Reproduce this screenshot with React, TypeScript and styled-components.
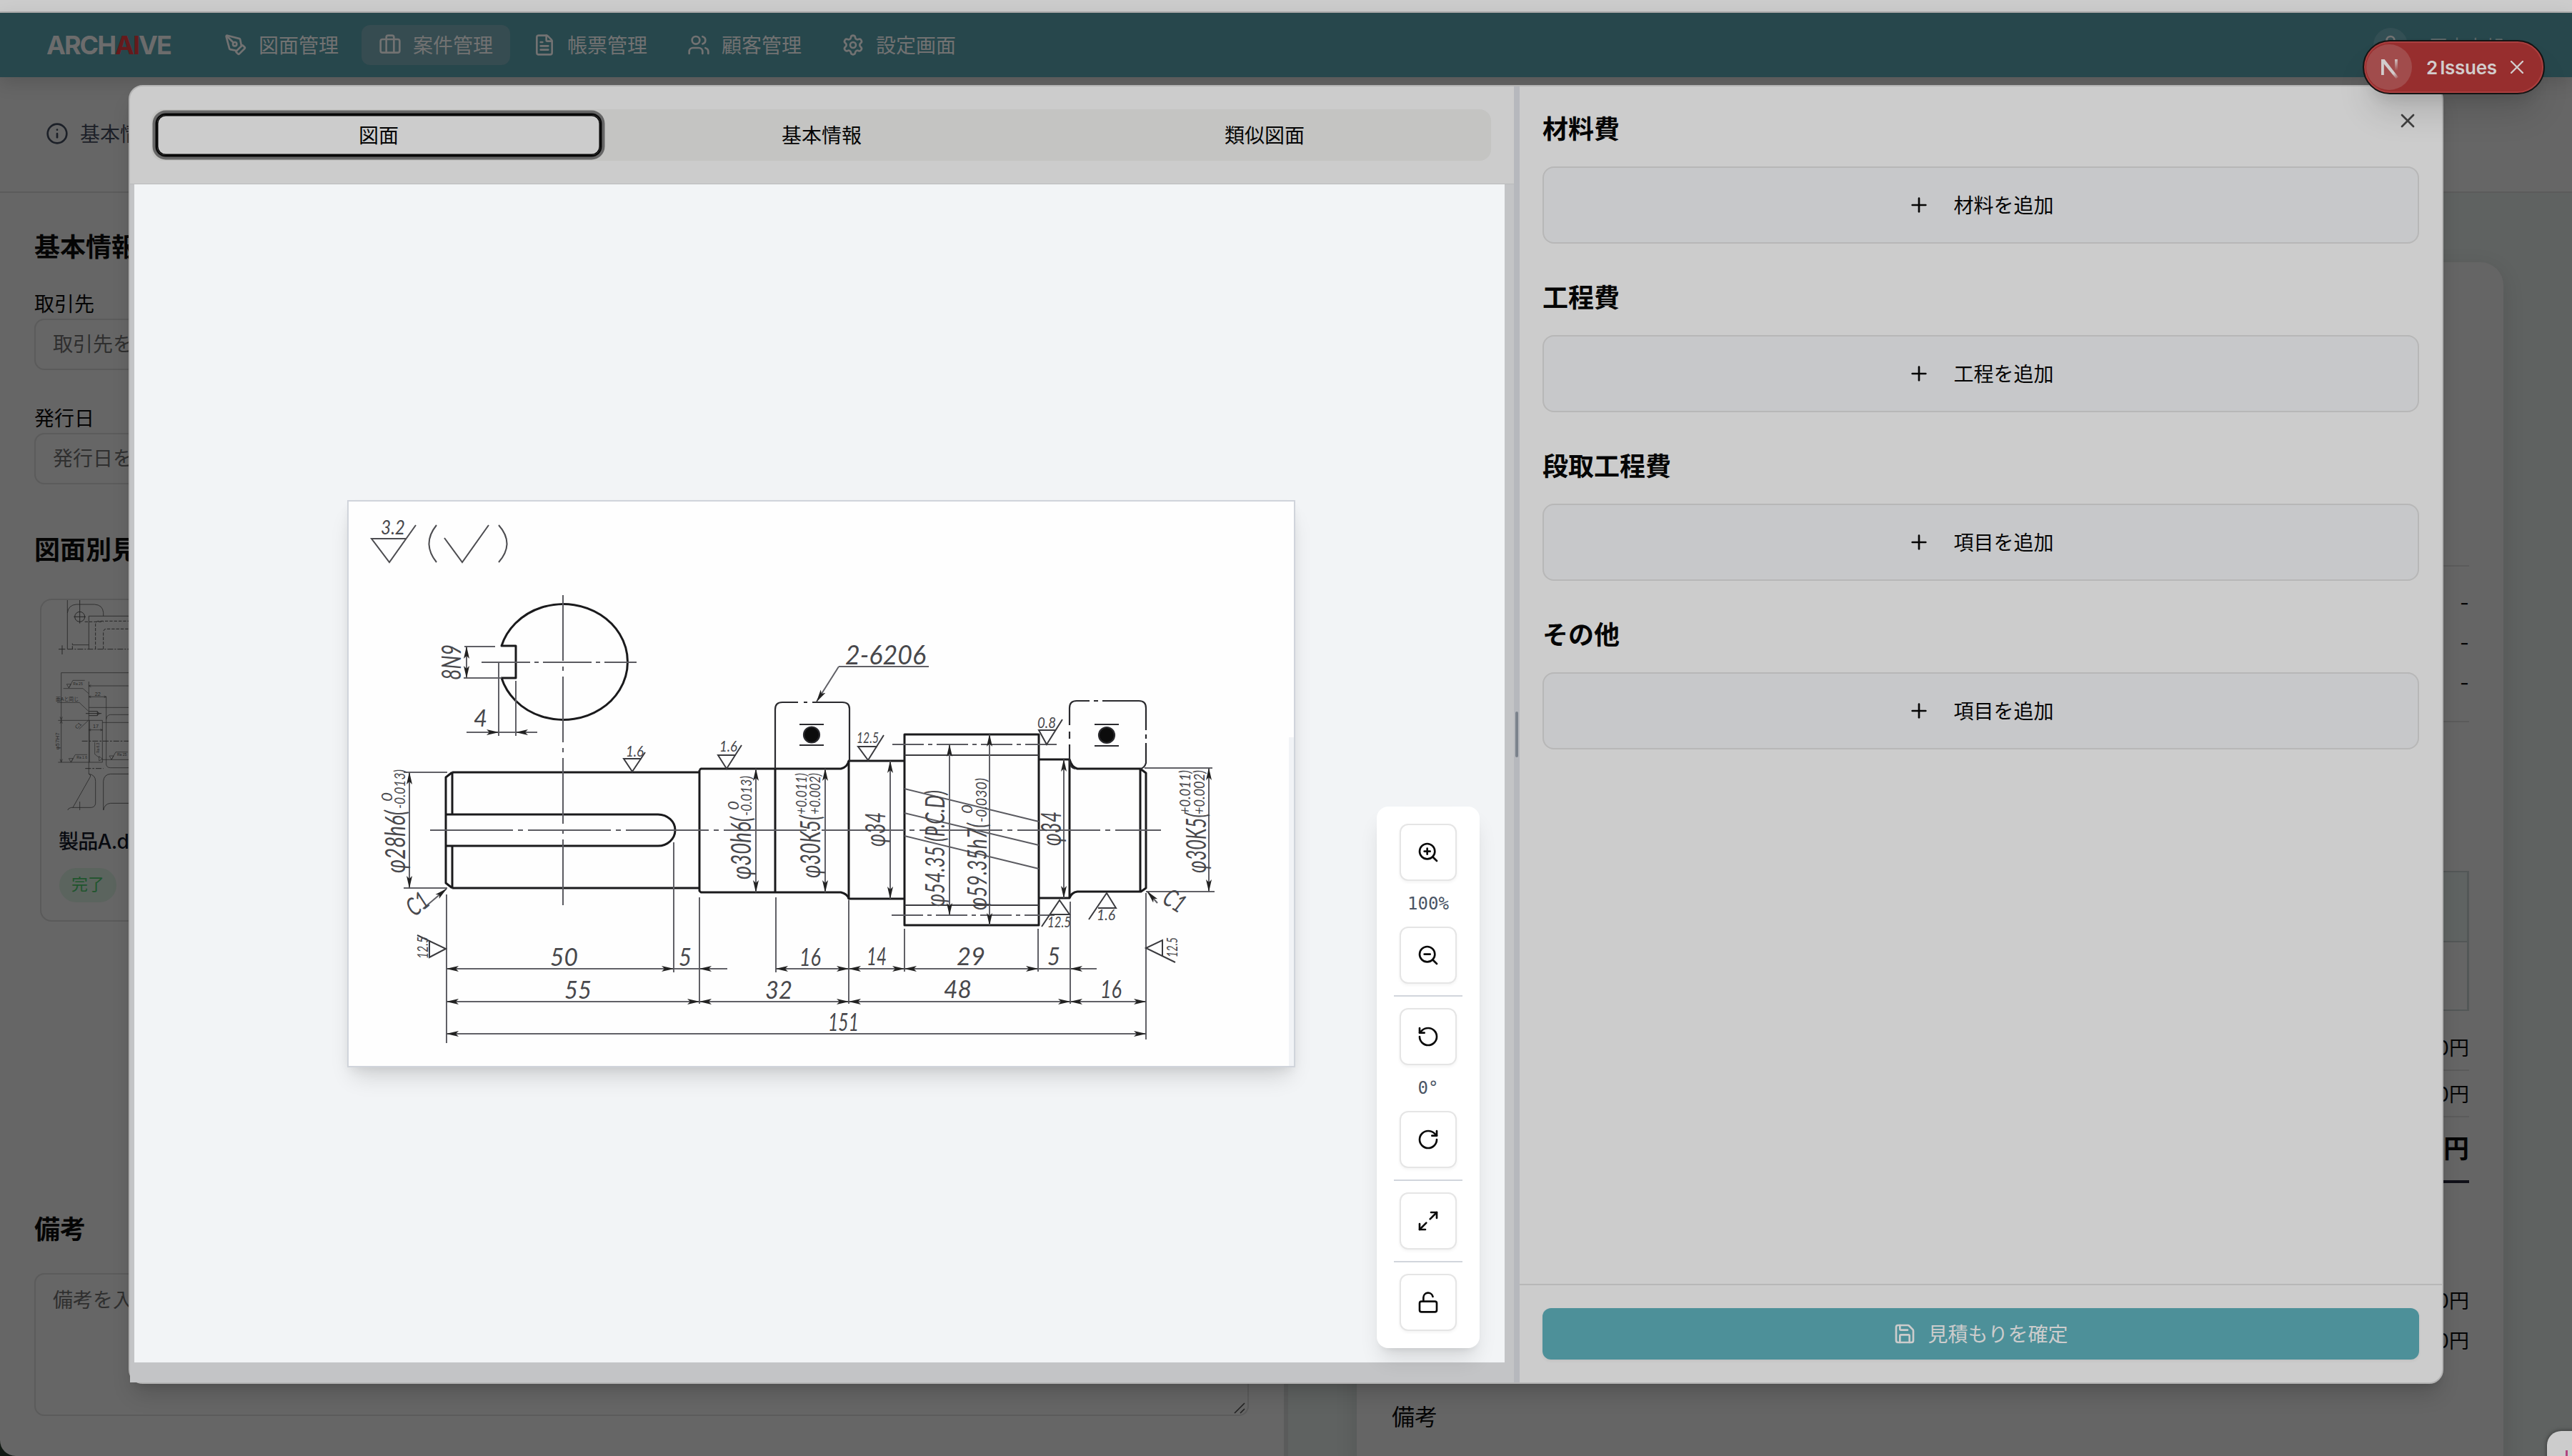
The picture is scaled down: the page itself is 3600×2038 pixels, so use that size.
import React from "react";
import styled, { createGlobalStyle, css } from "styled-components";
import {
  PenTool, FileText, Users, Settings, Info, User, Plus, X, Save,
  ZoomIn, ZoomOut, RotateCcw, RotateCw, Maximize2, LockOpen,
} from "lucide-react";

const Global = createGlobalStyle`
  * { box-sizing: border-box; }
  html, body { margin: 0; padding: 0; background: #121a14; }
  body { font-family: Inter, "Noto Sans CJK JP", sans-serif; font-size: 28px; color: #050505; }
  button { font: inherit; color: inherit; margin: 0; }
`;

const Page = styled.div`
  position: relative;
  width: 3600px;
  height: 2038px;
  overflow: hidden;
  display: flex;
  flex-direction: column;
  background: #666;
  border-radius: 0 0 0 22px;
`;

const TopStrip = styled.div`
  height: 18px;
  flex: none;
  background: #ccc;
  border-bottom: 2px solid #adadad;
`;

const Nav = styled.nav`
  height: 90px;
  flex: none;
  display: flex;
  align-items: center;
  gap: 8px;
  padding: 0 96px 0 65px;
  background: #27474c;
  box-shadow: 0 8px 24px rgba(0, 0, 0, 0.14);
  position: relative;
  color: #727272;
`;

const Logo = styled.div`
  width: 217px;
  padding-bottom: 1px;
  font-size: 36px;
  font-weight: 700;
  letter-spacing: -2px;
  color: #6c6c6c;
  span { color: #651a1c; }
`;

const NavItem = styled.a<{ $active?: boolean }>`
  display: flex;
  align-items: center;
  gap: 16px;
  height: 56px;
  padding: 0 24px;
  border-radius: 12px;
  white-space: nowrap;
  background: ${(p) => (p.$active ? "#364c51" : "transparent")};
`;

const Caption = styled.span`
  padding-bottom: 3px;
`;

const Account = styled.div`
  margin-left: auto;
  display: flex;
  align-items: center;
  gap: 30px;
  font-size: 26px;
  color: #5c6667;
`;

const Avatar = styled.span`
  width: 48px;
  height: 48px;
  display: grid;
  place-items: center;
  border-radius: 50%;
  background: #334f54;
  color: #727272;
`;

const SubBar = styled.div`
  height: 162px;
  flex: none;
  display: flex;
  align-items: center;
  gap: 16px;
  padding: 0 64px 2px;
  border-bottom: 2px solid #5b5b5b;
  color: #1c2028;
`;

const Body = styled.div`
  flex: 1;
  display: flex;
  min-height: 0;
`;

const FormColumn = styled.section`
  width: 1803px;
  flex: none;
  padding: 54px 49px 0 48px;
  border-right: 6px solid #5a5b5b;
`;

const Heading = styled.h2<{ $top?: number; $light?: boolean }>`
  margin: ${(p) => p.$top ?? 0}px 0 0;
  height: 44px;
  line-height: 44px;
  font-size: ${(p) => (p.$light ? 32 : 36)}px;
  font-weight: ${(p) => (p.$light ? 400 : 700)};
`;

const Label = styled.div<{ $top: number }>`
  margin-top: ${(p) => p.$top}px;
  height: 40px;
  line-height: 40px;
`;

const field = css`
  border: 2px solid #5b5b5b;
  border-radius: 14px;
  color: #2f2f2f;
  padding: 0 24px;
`;

const Field = styled.div`
  ${field}
  height: 72px;
  line-height: 68px;
`;

const TextArea = styled.div`
  ${field}
  display: flex;
  justify-content: space-between;
  height: 200px;
  margin-top: 39px;
  padding: 15px 2px 0 24px;
  line-height: 42px;
  svg { align-self: flex-end; }
`;

const ProductCard = styled.article`
  width: 330px;
  height: 452px;
  margin: 46px 0 0 8px;
  border: 2px solid #5a5a5a;
  border-radius: 16px;
  svg { display: block; }
`;

const ProductName = styled.div`
  margin: 24px 0 0 24px;
  height: 40px;
  line-height: 40px;
  font-weight: 500;
  letter-spacing: -0.7px;
  color: #080a10;
`;

const Status = styled.span`
  display: block;
  width: 80px;
  height: 48px;
  margin: 17px 0 0 25px;
  line-height: 46px;
  text-align: center;
  border-radius: 24px;
  background: #5b645e;
  color: #20552d;
  font-size: 23px;
`;

const PreviewColumn = styled.section`
  flex: 1;
  padding: 97px 96px 0 96px;
  background: #5f6261;
`;

const Paper = styled.div`
  height: 1700px;
  padding: 0 48px 0 49px;
  border-radius: 32px;
  background: #656565;
  box-shadow: 0 8px 30px rgba(0, 0, 0, 0.12);
`;

const Meta = styled.div`
  padding-top: 24px;
  height: 220px;
  border: solid #5b5b5b;
  border-width: 2px 0;
`;

const Row = styled.div<{ $h?: number; $line?: string; $bold?: boolean }>`
  height: ${(p) => p.$h ?? 56}px;
  display: flex;
  align-items: center;
  justify-content: flex-end;
  padding-bottom: ${(p) => (p.$bold ? 6 : 2)}px;
  border-bottom: ${(p) => p.$line ?? "0"};
  font-weight: ${(p) => (p.$bold ? 700 : 400)};
  font-size: ${(p) => (p.$bold ? 36 : 28)}px;
`;

const Spacer = styled.div<{ $h: number }>`
  height: ${(p) => p.$h}px;
`;

const Table = styled.div`
  height: 196px;
  border: 2px solid #535757;
  border-right-width: 3px;
  div { height: 98px; background: #5f6362; border-bottom: 2px solid #535757; }
`;

const Dialog = styled.div`
  position: absolute;
  left: 180px;
  top: 119px;
  width: 3240px;
  height: 1818px;
  display: flex;
  border: 2px solid #b4b4b4;
  border-radius: 20px;
  background: #ccc;
  box-shadow: 0 20px 30px -6px rgba(0, 0, 0, 0.16), 0 8px 12px -8px rgba(0, 0, 0, 0.14);
`;

const DrawingPane = styled.section`
  width: 1937px;
  display: flex;
  flex-direction: column;
`;

const TabBar = styled.div`
  height: 136px;
  padding: 32px 32px 0 30px;
`;

const TabList = styled.div`
  height: 72px;
  display: grid;
  grid-template-columns: repeat(3, 1fr);
  padding: 8px 7px 8px 8px;
  border-radius: 16px;
  background: #c4c4c2;
`;

const Tab = styled.button<{ $active?: boolean }>`
  border: 0;
  padding: 0 0 3px;
  border-radius: 12px;
  background: ${(p) => (p.$active ? "#ccc" : "transparent")};
  box-shadow: ${(p) => (p.$active ? "inset 0 0 0 1.5px #080808, 0 0 0 2.5px #080808, 0 0 0 6.5px #666" : "none")};
`;

const Stage = styled.div`
  flex: 1;
  display: flex;
  padding: 0 13px 28px 6px;
  border-top: 1px solid #b9babb;
  background: #c3c4c6;
`;

const Viewer = styled.div`
  position: relative;
  flex: 1;
  display: flex;
  align-items: center;
  justify-content: center;
  padding: 29px 0 0 5px;
  background: #f2f4f6;
`;

const Sheet = styled.div`
  width: 1327px;
  height: 794px;
  border: 2px solid #d0d4db;
  background: #fefefe;
  box-shadow: 0 20px 30px -8px rgba(0, 0, 0, 0.14), 0 6px 14px -4px rgba(0, 0, 0, 0.08);
  svg { display: block; }
`;

const Toolbar = styled.div`
  position: absolute;
  right: 35px;
  bottom: 20px;
  width: 144px;
  padding: 24px;
  display: flex;
  flex-direction: column;
  align-items: center;
  gap: 16px;
  border-radius: 16px;
  background: #fff;
  box-shadow: 0 20px 30px -6px rgba(0, 0, 0, 0.12), 0 8px 12px -8px rgba(0, 0, 0, 0.12);
`;

const ToolButton = styled.button`
  width: 80px;
  height: 80px;
  display: grid;
  place-items: center;
  padding: 0;
  border: 2px solid #e5e5e5;
  border-radius: 12px;
  background: #fff;
  color: #0a0a0a;
  box-shadow: 0 2px 4px rgba(0, 0, 0, 0.05);
`;

const Reading = styled.div`
  height: 32px;
  line-height: 32px;
  font-family: "DejaVu Sans Mono", monospace;
  font-size: 24px;
  color: #4a5565;
`;

const Rule = styled.div`
  width: 96px;
  height: 2px;
  background: #d1d5dc;
`;

const Splitter = styled.div`
  width: 8px;
  display: flex;
  justify-content: center;
  align-items: center;
  background: #b6b8bd;
`;

const Grip = styled.div`
  width: 4px;
  height: 64px;
  border-radius: 2px;
  background: #7b828c;
`;

const CostPane = styled.section`
  position: relative;
  flex: 1;
  display: flex;
  flex-direction: column;
`;

const CostList = styled.div`
  flex: 1;
  display: flex;
  flex-direction: column;
  gap: 54px;
  padding: 38px 32px 0;
`;

const AddButton = styled.button`
  width: 100%;
  height: 108px;
  margin-top: 30px;
  display: flex;
  align-items: center;
  justify-content: center;
  gap: 32px;
  border: 2px solid #b7b7b7;
  border-radius: 16px;
  background: #c7c8ca;
`;

const Footer = styled.footer`
  height: 138px;
  padding: 32px;
  border-top: 2px solid #b7b7b7;
`;

const Confirm = styled.button`
  width: 100%;
  height: 72px;
  display: flex;
  align-items: center;
  justify-content: center;
  gap: 16px;
  border: 0;
  border-radius: 12px;
  background: #4d9099;
  color: #ccc;
  box-shadow: 0 2px 4px rgba(0, 0, 0, 0.06);
`;

const CloseButton = styled.button`
  position: absolute;
  right: 32px;
  top: 32px;
  width: 32px;
  height: 32px;
  padding: 0;
  border: 0;
  background: none;
  color: #404040;
  svg { display: block; }
`;

const Issues = styled.div`
  position: absolute;
  left: 3307px;
  top: 56px;
  width: 255px;
  height: 76px;
  display: flex;
  align-items: center;
  padding-left: 3px;
  border: 2px solid #141414;
  border-radius: 38px;
  background: #972e2e;
  color: #d2cccc;
  font-size: 26px;
  font-weight: 600;
  box-shadow: inset 0 0 0 2px #ab3f3f, 0 32px 48px -8px rgba(0, 0, 0, 0.14), 0 16px 16px -8px rgba(0, 0, 0, 0.08);
  > span { width: 98px; margin-left: 20px; white-space: nowrap; letter-spacing: -0.3px; word-spacing: -3px; }
  > svg { margin-left: 20px; }
`;

const IssueMark = styled.div`
  width: 64px;
  height: 64px;
  display: grid;
  place-items: center;
  border-radius: 50%;
  background: #a14c4c;
`;

const CornerChip = styled.div`
  position: absolute;
  left: 3565px;
  top: 2003px;
  width: 80px;
  height: 80px;
  padding: 27px 0 0 26px;
  border-radius: 20px;
  background: #ccc;
  box-shadow: 0 0 6px rgba(0, 0, 0, 0.5);
  i { display: block; width: 3px; height: 12px; background: #b0447f; }
`;

const BriefcaseIcon = () => (
  <svg width="32" height="32" viewBox="0 0 24 24" fill="none" stroke="currentColor" strokeWidth="2" strokeLinecap="round" strokeLinejoin="round">
    <path d="M16 20V4a2 2 0 0 0-2-2h-4a2 2 0 0 0-2 2v16" />
    <rect x="2" y="6" width="20" height="14" rx="2" />
  </svg>
);

const NextMark = () => (
  <svg width="30" height="34" viewBox="0 0 30 34" fill="none">
    <defs>
      <linearGradient id="diag" x1="12" y1="14" x2="28" y2="33" gradientUnits="userSpaceOnUse">
        <stop offset=".6" stopColor="#d2cccc" /><stop offset="1" stopColor="#d2cccc" stopOpacity="0" />
      </linearGradient>
      <linearGradient id="stem" x1="0" y1="5" x2="0" y2="22" gradientUnits="userSpaceOnUse">
        <stop stopColor="#d2cccc" /><stop offset="1" stopColor="#d2cccc" stopOpacity="0" />
      </linearGradient>
    </defs>
    <rect x="4" y="6" width="3.8" height="22" fill="#d2cccc" />
    <path d="M4 6h4.6L28 31l-3.4 2L4 8z" fill="url(#diag)" />
    <rect x="23" y="6" width="3.8" height="17" fill="url(#stem)" />
  </svg>
);

type NoteProps = { x: number; y: number; w: number; s: number; r?: number; children: string };
const Note = ({ x, y, w, s, r = 0, children }: NoteProps) => (
  <text
    transform={`translate(${x} ${y}) rotate(${r})`}
    fontSize={s}
    textLength={w}
    lengthAdjust="spacingAndGlyphs"
    fill="#48484c"
    stroke="none"
  >
    {children}
  </text>
);

type DimProps = { a: [number, number]; b: [number, number]; one?: boolean };
const Dim = ({ a, b, one }: DimProps) => (
  <path d={`M${a[0]} ${a[1]}L${b[0]} ${b[1]}`} markerEnd="url(#arrow)" markerStart={one ? undefined : "url(#arrow)"} />
);

const ShaftDrawing = () => (
  <svg width="1323" height="790" viewBox="488 702 1323 790" fill="none" fontFamily="Lato, sans-serif" fontStyle="italic" fontWeight="400">
    <defs>
      <marker id="arrow" markerUnits="userSpaceOnUse" markerWidth="18" markerHeight="10" refX="17" refY="5" orient="auto-start-reverse">
        <path d="M0 1 17.5 5 0 9 4 5z" fill="#222" stroke="none" />
      </marker>
    </defs>
    <rect x="1804" y="1032" width="7" height="460" fill="#f1f3f6" />

    {/* general surface finish */}
    <g stroke="#4c4c50" strokeWidth="2">
      <path d="M582 735 545 787 520 754H569M622 753l25 34 37-52M611 735q-21 26 0 52M698 735q23 26 0 52" />
    </g>
    <Note x={533} y={748} w={34} s={27}>3.2</Note>

    {/* outlines */}
    <g stroke="#1a1a1c" strokeWidth="3" strokeLinejoin="round">
      <path d="M702 904A90 81 0 1 1 702 949H722V904Z" />
      <path d="M633 1081H979M633 1243H979M633 1081 624 1088V1236L633 1243M633 1081V1140M633 1184V1243M624 1140H921a24 22 0 0 1 0 44H624" />
      <path d="M979 1078V1247L981 1249H1177Q1186 1251 1188 1258H1266M979 1078 981 1076H1177Q1186 1074 1188 1065H1266" />
      <path d="M1085 1076V1249M1188 1065V1258M1266 1028H1454V1295H1266Z" />
      <path d="M1454 1063H1497Q1500 1074 1508 1076H1596L1604 1082V1243L1597 1248H1508Q1500 1249 1497 1257H1454M1497 1063V1257M1596 1076V1248" />
    </g>
    <g stroke="#2a2a2e" strokeWidth="2.2">
      <path d="M1085 1076V993q0-10 10-10H1117M1125 983h5M1137 983H1179q10 0 10 9V1065" />
      <path d="M1497 1015V991q0-10 10-10H1525M1531 981h6M1543 981H1594q10 0 10 10V1022M1497 1024v10M1497 1042V1066q1 9 8 10M1604 1028v6M1604 1040V1068q-2 7-8 8" />
      <path d="M1119 1014h34M1119 1043h34M1532 1014h34M1532 1044h34" />
      <circle cx="1136" cy="1028.5" r="11" fill="#0c0c0c" />
      <circle cx="1549" cy="1029" r="11" fill="#0c0c0c" />
      <path d="M1266 1057H1454M1266 1267H1454" stroke="#3a3a3e" />
    </g>

    {/* centre lines */}
    <g stroke="#5a5a60" strokeWidth="2">
      <path d="M788 833V1275" strokeDasharray="92 8 6 8" />
      <path d="M674 927H891" strokeDasharray="68 6 6 6" />
      <path d="M602 1162H1625" strokeDasharray="116 7 7 7" />
      <path d="M1249 1042H1484M1248 1281H1476" strokeDasharray="44 6 6 6" />
      <path d="M1266 1104 1454 1150M1266 1138 1454 1183M1266 1170 1454 1216" />
    </g>

    {/* extension and dimension lines */}
    <g stroke="#606066" strokeWidth="2">
      <path d="M650 905H693M649 949H702M698 927V1030M722 953V1030M565 1081H626M565 1243H626" />
      <path d="M625 1252V1460M943 1179V1361M979 1256V1405M1086 1256V1361M1188 1260V1405M1266 1300V1360M1453 1300V1360M1498 1262V1405M1604 1250V1455" />
      <path d="M1602 1075H1697M1604 1248H1700M1174 933H1300" />
      <Dim a={[653, 905]} b={[653, 949]} />
      <Dim one a={[653, 1025]} b={[698, 1025]} />
      <Dim one a={[752, 1025]} b={[722, 1025]} />
      <path d="M698 1025h24" />
      <Dim a={[573, 1081]} b={[573, 1243]} />
      <Dim a={[1058, 1076]} b={[1058, 1249]} />
      <Dim a={[1155, 1076]} b={[1155, 1249]} />
      <Dim a={[1246, 1065]} b={[1246, 1258]} />
      <Dim a={[1329, 1042]} b={[1329, 1281]} />
      <Dim a={[1385, 1028]} b={[1385, 1295]} />
      <Dim a={[1489, 1063]} b={[1489, 1257]} />
      <Dim a={[1692, 1075]} b={[1692, 1248]} />
      <Dim a={[625, 1356]} b={[943, 1356]} />
      <path d="M943 1356h36" />
      <Dim one a={[1018, 1356]} b={[979, 1356]} />
      <Dim a={[1086, 1356]} b={[1188, 1356]} />
      <Dim a={[1188, 1356]} b={[1266, 1356]} />
      <Dim a={[1266, 1356]} b={[1453, 1356]} />
      <path d="M1453 1356h45" />
      <Dim one a={[1535, 1356]} b={[1498, 1356]} />
      <Dim a={[625, 1402]} b={[979, 1402]} />
      <Dim a={[979, 1402]} b={[1188, 1402]} />
      <Dim a={[1188, 1402]} b={[1498, 1402]} />
      <Dim a={[1498, 1402]} b={[1604, 1402]} />
      <Dim a={[625, 1447]} b={[1604, 1447]} />
      <Dim one a={[1174, 933]} b={[1143, 982]} />
      <Dim one a={[592, 1272]} b={[625, 1244]} />
      <Dim one a={[1620, 1264]} b={[1606, 1248]} />
    </g>

    {/* surface finish marks */}
    <g stroke="#3a3a3e" strokeWidth="2">
      <path d="M903 1053 885 1080 873 1062H898M1038 1043 1017 1076 1005 1057H1030" />
      <path d="M1237 1029 1215 1064 1201 1045H1228M1487 1007 1465 1042 1454 1022H1478" />
      <path d="M1458 1297 1483 1260 1497 1280H1470M1524 1287 1549 1250 1562 1271H1537" />
      <path d="M584 1309 624 1328 601 1340V1316M1645 1347 1604 1327 1627 1316V1338" />
    </g>

    <Note x={645} y={952} w={50} s={36} r={-90}>8N9</Note>
    <Note x={663} y={1017} w={19} s={32}>4</Note>
    <Note x={567} y={1222} w={88} s={38} r={-90}>φ28h6(</Note>
    <Note x={549} y={1122} w={13} s={21} r={-90}>0</Note>
    <Note x={567} y={1132} w={55} s={22} r={-90}>-0.013)</Note>
    <Note x={580} y={1284} w={30} s={35} r={-38}>C1</Note>
    <Note x={599} y={1342} w={31} s={22} r={-90}>12.5</Note>
    <Note x={876} y={1059} w={25} s={21}>1.6</Note>
    <Note x={1007} y={1052} w={25} s={21}>1.6</Note>
    <Note x={1051} y={1231} w={88} s={38} r={-90}>φ30h6(</Note>
    <Note x={1034} y={1134} w={13} s={21} r={-90}>0</Note>
    <Note x={1052} y={1142} w={56} s={22} r={-90}>-0.013)</Note>
    <Note x={1148} y={1229} w={88} s={38} r={-90}>φ30K5(</Note>
    <Note x={1129} y={1140} w={58} s={21} r={-90}>+0.011)</Note>
    <Note x={1148} y={1140} w={58} s={21} r={-90}>+0.002)</Note>
    <Note x={1239} y={1185} w={48} s={38} r={-90}>φ34</Note>
    <Note x={1322} y={1269} w={163} s={37} r={-90}>φ54.35 (P.C.D)</Note>
    <Note x={1381} y={1274} w={122} s={37} r={-90}>φ59.35h7(</Note>
    <Note x={1361} y={1139} w={13} s={21} r={-90}>0</Note>
    <Note x={1381} y={1151} w={62} s={22} r={-90}>-0.030)</Note>
    <Note x={1485} y={1184} w={48} s={38} r={-90}>φ34</Note>
    <Note x={1688} y={1222} w={84} s={38} r={-90}>φ30K5(</Note>
    <Note x={1666} y={1140} w={62} s={21} r={-90}>+0.011)</Note>
    <Note x={1686} y={1140} w={62} s={21} r={-90}>+0.002)</Note>
    <Note x={1625} y={1263} w={30} s={35} r={32}>C1</Note>
    <Note x={1648} y={1340} w={28} s={22} r={-90}>12.5</Note>
    <Note x={1199} y={1040} w={31} s={21}>12.5</Note>
    <Note x={1452} y={1019} w={26} s={21}>0.8</Note>
    <Note x={1466} y={1298} w={33} s={21}>12.5</Note>
    <Note x={1535} y={1288} w={26} s={21}>1.6</Note>
    <Note x={1183} y={930} w={113} s={37}>2-6206</Note>
    <Note x={770} y={1352} w={39} s={35}>50</Note>
    <Note x={950} y={1352} w={18} s={35}>5</Note>
    <Note x={1119} y={1352} w={30} s={35}>16</Note>
    <Note x={1213} y={1351} w={28} s={35}>14</Note>
    <Note x={1339} y={1351} w={40} s={35}>29</Note>
    <Note x={1466} y={1351} w={18} s={35}>5</Note>
    <Note x={790} y={1398} w={38} s={35}>55</Note>
    <Note x={1071} y={1398} w={38} s={35}>32</Note>
    <Note x={1321} y={1397} w={39} s={35}>48</Note>
    <Note x={1540} y={1397} w={30} s={35}>16</Note>
    <Note x={1159} y={1443} w={43} s={35}>151</Note>
  </svg>
);

const ProductThumb = () => (
  <svg width="320" height="294" viewBox="54 30 960 882" fill="none" stroke="#262626" strokeWidth="3" fontFamily="'Liberation Sans', 'Noto Sans CJK JP', sans-serif">
    <path d="M163 30V236M163 84q4-34 38-36h76q34 2 37 34v15M253 236V97H440M184 218H253" strokeWidth="2.5" />
    <circle cx="215" cy="100" r="21" />
    <path d="M215 30v98M190 100h50M141 220v38M126 236h28" />
    <path d="M163 236H440" strokeDasharray="24 6 6 6" />
    <path d="M236 121H314M281 236V130q2-11 12-12H440M314 236V163q2-12 12-12H440M184 236V212" strokeDasharray="13 6" />
    <path d="M440 335H137V533M124 535H310V711M124 711H310M137 535V711M253 372V760M256 535V711M253 390H440M253 436H326V720q2 14 18 14H440M253 481H440M326 530q2-18 18-19H440M310 544H440M310 700H440" strokeWidth="2.2" />
    <path d="M132 520l5 14 5-14M132 698l5 13 5-13M132 548l5-12 5 12M262 386l-9 4 9 5M262 432l-9 4 9 4M317 432l9 4-9 4M262 571l-9 4 9 4M301 571l9 4-9 4M253 575h57" strokeWidth="2" />
    <path d="M160 383h18l-9 16zM169 399l17-32h50M146 401h82l24 21M169 695h18l-9 16zM178 711l18-32h50M339 684h18l-9 16zM348 700l18-32h50M278 627v50l18 14M296 686l14 11-14 8zM120 460h93l38 36M212 572l38-36" strokeWidth="2" />
    <path d="M240 506h66M253 497h36v18h-36M289 499l9 7-9 7" />
    <path d="M224 622H440M238 737H314" strokeDasharray="24 6 8 6" />
    <path d="M253 760q10 3 6 12L186 901M163 914q4-12 16-13h84q17-2 18-18V790q0-26-28-30M215 876v38M314 914V790q3-28 30-30H440M314 914q4-29 30-31H440" strokeWidth="2.5" />
    <g fill="#262626" stroke="none">
      <text x="187" y="386" fontSize="15">Ra 25</text>
      <text x="278" y="431" fontSize="22">22</text>
      <text x="114" y="454" fontSize="22" textLength="96" lengthAdjust="spacingAndGlyphs">面Aと同じ</text>
      <text x="270" y="566" fontSize="22">17</text>
      <text transform="translate(204 572) rotate(-45)" fontSize="22">C1</text>
      <text transform="translate(129 658) rotate(-90)" fontSize="22" textLength="72">φ57H7</text>
      <text x="202" y="697" fontSize="15">Ra 1.6</text>
      <text x="372" y="684" fontSize="15">Ra 25</text>
      <text transform="translate(297 673) rotate(-90)" fontSize="15">Ra 6.3</text>
    </g>
  </svg>
);

const sections = [
  ["材料費", "材料を追加"],
  ["工程費", "工程を追加"],
  ["段取工程費", "項目を追加"],
  ["その他", "項目を追加"],
];

export default function App() {
  return (
    <>
      <Global />
      <Page>
        <TopStrip />
        <Nav>
          <Logo>ARCH<span>AI</span>VE</Logo>
          <NavItem><PenTool size={32} /><Caption>図面管理</Caption></NavItem>
          <NavItem $active><BriefcaseIcon /><Caption>案件管理</Caption></NavItem>
          <NavItem><FileText size={32} /><Caption>帳票管理</Caption></NavItem>
          <NavItem><Users size={32} /><Caption>顧客管理</Caption></NavItem>
          <NavItem><Settings size={32} /><Caption>設定画面</Caption></NavItem>
          <Account><Avatar><User size={32} /></Avatar>田中太郎</Account>
        </Nav>
        <SubBar><Info size={32} /><Caption>基本情報</Caption></SubBar>
        <Body>
          <FormColumn>
            <Heading>基本情報</Heading>
            <Label $top={38}>取引先</Label>
            <Field>取引先を</Field>
            <Label $top={48}>発行日</Label>
            <Field>発行日を</Field>
            <Heading $top={70}>図面別見</Heading>
            <ProductCard>
              <ProductThumb />
              <ProductName>製品A.d</ProductName>
              <Status>完了</Status>
            </ProductCard>
            <Heading $top={409}>備考</Heading>
            <TextArea>
              備考を入
              <svg width="18" height="18" viewBox="0 0 18 18" stroke="#222" strokeWidth="1.6"><path d="M2 16 16 2M10 16l6-6" /></svg>
            </TextArea>
          </FormColumn>
          <PreviewColumn>
            <Paper>
              <Spacer $h={424} />
              <Meta><Row>-</Row><Row>-</Row><Row>-</Row></Meta>
              <Spacer $h={208} />
              <Table><div /></Table>
              <Spacer $h={20} />
              <Row $h={64} $line="2px solid #5b5b5b">0円</Row>
              <Row $h={65} $line="2px solid #5b5b5b">0円</Row>
              <Row $h={92} $bold $line="4px solid #101018">0円</Row>
              <Spacer $h={136} />
              <Row>0円</Row>
              <Row>0円</Row>
              <Heading $top={58} $light>備考</Heading>
            </Paper>
          </PreviewColumn>
        </Body>

        <Dialog>
          <DrawingPane>
            <TabBar>
              <TabList>
                <Tab $active>図面</Tab>
                <Tab>基本情報</Tab>
                <Tab>類似図面</Tab>
              </TabList>
            </TabBar>
            <Stage>
              <Viewer>
                <Sheet><ShaftDrawing /></Sheet>
                <Toolbar>
                  <ToolButton><ZoomIn size={32} /></ToolButton>
                  <Reading>100%</Reading>
                  <ToolButton><ZoomOut size={32} /></ToolButton>
                  <Rule />
                  <ToolButton><RotateCcw size={32} /></ToolButton>
                  <Reading>0°</Reading>
                  <ToolButton><RotateCw size={32} /></ToolButton>
                  <Rule />
                  <ToolButton><Maximize2 size={32} /></ToolButton>
                  <Rule />
                  <ToolButton><LockOpen size={32} /></ToolButton>
                </Toolbar>
              </Viewer>
            </Stage>
          </DrawingPane>
          <Splitter><Grip /></Splitter>
          <CostPane>
            <CostList>
              {sections.map(([title, action]) => (
                <div key={title}>
                  <Heading>{title}</Heading>
                  <AddButton><Plus size={32} /><Caption>{action}</Caption></AddButton>
                </div>
              ))}
            </CostList>
            <Footer><Confirm><Save size={32} /><Caption>見積もりを確定</Caption></Confirm></Footer>
            <CloseButton><X size={32} /></CloseButton>
          </CostPane>
        </Dialog>

        <Issues>
          <IssueMark><NextMark /></IssueMark>
          <span>2 Issues</span>
          <svg width="18" height="18" viewBox="0 0 18 18" stroke="currentColor" strokeWidth="2.4" strokeLinecap="round"><path d="M1 1l16 16M17 1 1 17" /></svg>
        </Issues>
        <CornerChip><i /></CornerChip>
      </Page>
    </>
  );
}
